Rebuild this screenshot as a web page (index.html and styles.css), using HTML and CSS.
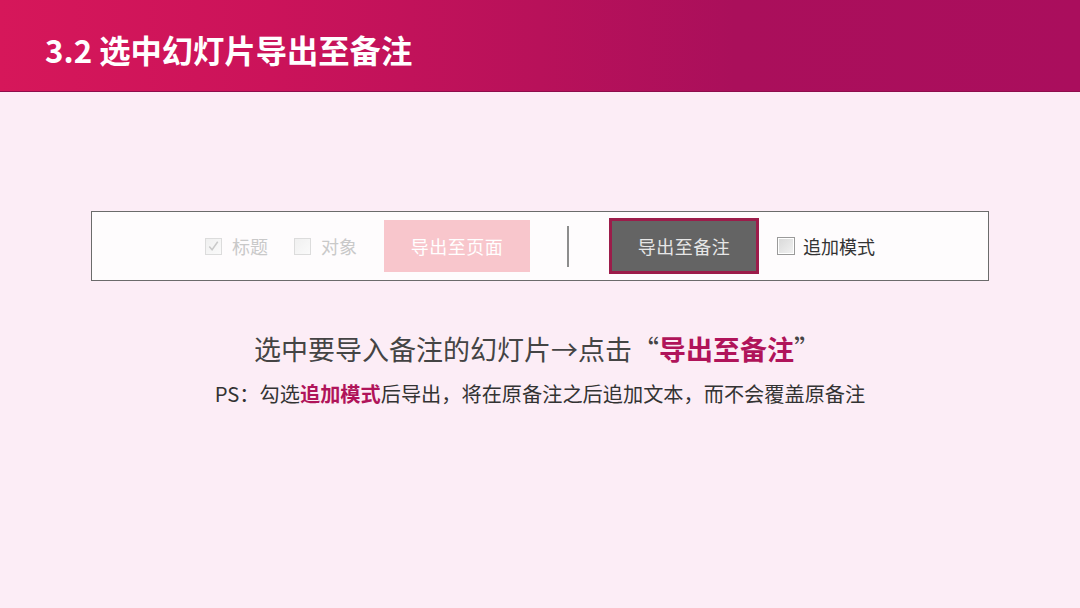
FILE: index.html
```html
<!DOCTYPE html>
<html lang="zh-CN">
<head>
<meta charset="utf-8">
<title>3.2 选中幻灯片导出至备注</title>
<link rel="stylesheet" href="styles.css">
</head>
<body>
<header class="topbar">
  <h1 class="title">3.2 选中幻灯片导出至备注</h1>
</header>
<main class="content">
  <div class="toolbar">
    <label class="opt opt-disabled">
      <span class="box">
        <svg viewBox="0 0 16 16" width="16" height="16"><path d="M3.5 8.5 L6.5 12 L12.5 3.5" fill="none" stroke="#c9c9c9" stroke-width="1.6"/></svg>
      </span>
      <span class="opt-label">标题</span>
    </label>
    <label class="opt opt-disabled">
      <span class="box"></span>
      <span class="opt-label">对象</span>
    </label>
    <span class="btn btn-light">导出至页面</span>
    <span class="sep"></span>
    <span class="btn btn-dark">导出至备注</span>
    <label class="opt opt-active">
      <span class="box box-active"></span>
      <span class="opt-label">追加模式</span>
    </label>
  </div>
  <p class="lead">选中要导入备注的幻灯片→点击“<strong class="hl">导出至备注</strong>”</p>
  <p class="note">PS：勾选<strong class="hl">追加模式</strong>后导出，将在原备注之后追加文本，而不会覆盖原备注</p>
</main>
</body>
</html>
```

FILE: styles.css
```css
html, body {
  margin: 0;
  padding: 0;
}
body {
  width: 1080px;
  height: 608px;
  overflow: hidden;
  background: #fcedf6;
  font-family: "Noto Sans CJK SC", "Noto Sans", sans-serif;
}
.topbar {
  box-sizing: border-box;
  height: 92px;
  padding: 9px 0 0 45px;
  display: flex;
  align-items: center;
  background: linear-gradient(90deg, #d6175a 0%, #cb135a 25%, #b8115a 50%, #aa0f5b 68%, #aa0e5d 100%);
  border-bottom: 1px solid #8e0c4c;
}
.title {
  margin: 0;
  color: #ffffff;
  font-size: 31.3px;
  font-weight: 700;
  line-height: 40px;
  letter-spacing: 0;
}
.content {
  padding-top: 119px;
  display: flex;
  flex-direction: column;
  align-items: center;
}
.toolbar {
  box-sizing: border-box;
  width: 898px;
  height: 70px;
  border: 1px solid #6b6b6b;
  background: #fefcfd;
  display: flex;
  align-items: center;
  padding-left: 113px;
}
.opt {
  display: flex;
  align-items: center;
  font-size: 18px;
  line-height: 24px;
}
.box {
  box-sizing: border-box;
  width: 17px;
  height: 17px;
  display: flex;
  align-items: center;
  justify-content: center;
  border: 1px solid #dcdcdc;
  background: linear-gradient(135deg, #f0f0f0, #fafafa);
}
.opt-label {
  margin-left: 10px;
}
.opt-disabled {
  color: #c9c9c9;
  margin-right: 26px;
}
.btn {
  box-sizing: border-box;
  display: flex;
  align-items: center;
  justify-content: center;
  font-size: 18px;
  letter-spacing: 0.5px;
}
.btn-light {
  width: 146px;
  height: 52px;
  margin-left: 1px;
  background: #f8c6cc;
  color: #ffffff;
}
.sep {
  width: 2px;
  height: 41px;
  background: #8d8d8d;
  margin: 0 40px 0 37px;
}
.btn-dark {
  width: 150px;
  height: 56px;
  background: #646464;
  border: 3px solid #9c1c4a;
  color: #e6e6e6;
}
.opt-active {
  margin-left: 18px;
  color: #333333;
}
.box-active {
  width: 18px;
  height: 18px;
  border: 1px solid #9a9a9a;
  background: linear-gradient(135deg, #d8d8d8, #f2f2f2);
  box-shadow: inset 0 0 0 1px #ffffff;
}
.opt-active .opt-label {
  margin-left: 8px;
}
.lead {
  margin: 50px 5px 0 0;
  font-size: 27px;
  line-height: 36px;
  color: #444444;
}
.note {
  margin: 13px 0 0 0;
  font-size: 20.2px;
  line-height: 28px;
  color: #333333;
}
.hl {
  color: #b0145a;
  font-weight: 700;
}
```
